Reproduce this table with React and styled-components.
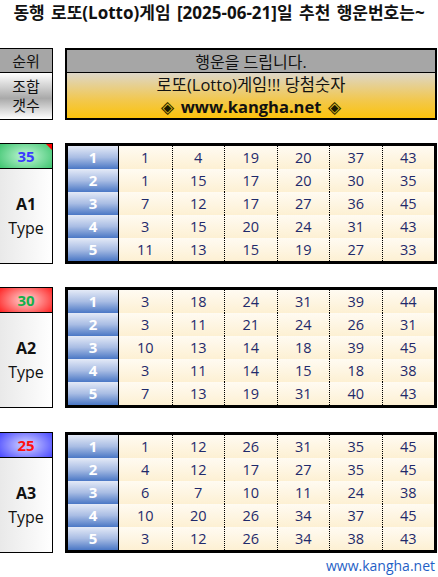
import React from "react";
import styled, { createGlobalStyle } from "styled-components";

const Global = createGlobalStyle`
  html, body { margin: 0; padding: 0; background: #fff; }
  body { font-family: "Open Sans", "Noto Sans CJK KR", sans-serif; width: 438px; overflow: hidden; }
`;

const Page = styled.div`
  width: 438px;
  display: flex;
  flex-direction: column;
`;

const Title = styled.h1`
  margin: 0;
  height: 48px;
  padding-top: 1px;
  box-sizing: border-box;
  font-size: 17px;
  font-weight: 700;
  line-height: 24px;
  text-align: center;
  color: #111;
  word-spacing: 2px;
  white-space: nowrap;
`;

const Row = styled.div`
  display: flex;
  align-items: stretch;
  gap: 12px;
  margin-left: -1px;
`;

const LeftCol = styled.div`
  width: 54px;
  box-sizing: border-box;
  border: 1px solid #000;
  display: flex;
  flex-direction: column;
  flex-shrink: 0;
`;

const HeadCol = styled(LeftCol)`
  height: 72px;
`;

const RankHead = styled.div`
  height: 23px;
  background: #a6a6a6;
  border-bottom: 1px solid #000;
  display: flex;
  align-items: center;
  justify-content: center;
  font-size: 15px;
  color: #111;
`;

const CountHead = styled.div`
  flex: 1;
  background: linear-gradient(#ffffff 0%, #a9a9a9 55%, #ffffff 100%);
  display: flex;
  flex-direction: column;
  align-items: center;
  justify-content: center;
  font-size: 15px;
  line-height: 19px;
  color: #111;
`;

const MainHead = styled.div`
  flex: 1;
  box-sizing: border-box;
  border: 2px solid #000;
  display: flex;
  flex-direction: column;
  margin-right: 1px;
`;

const GrayBar = styled.div`
  height: 22px;
  background: #a6a6a6;
  border-bottom: 1px solid #000;
  display: flex;
  align-items: center;
  justify-content: center;
  font-size: 16px;
  color: #111;
`;

const GoldBar = styled.div`
  flex: 1;
  background: linear-gradient(#ddd6c8 0%, #f2c84e 60%, #fcc30c 100%);
  display: flex;
  flex-direction: column;
  align-items: center;
  justify-content: center;
  font-size: 16.5px;
  line-height: 22px;
  color: #111;
`;

const Site = styled.span`
  font-weight: 700;
  display: flex;
  align-items: center;
  gap: 7px;
`;

const Diamond = styled.span`
  font-weight: 400;
  color: #1a1a00;
  font-size: 17px;
  text-shadow: 0 0 1px #d8b000;
`;

const Block = styled.div`
  display: flex;
  gap: 12px;
  margin-left: -1px;
  margin-top: ${(p) => p.$top}px;
`;

const TypeCol = styled(LeftCol)`
  height: 121px;
`;

const Badge = styled.div`
  position: relative;
  height: 24px;
  border-bottom: 1px solid #000;
  display: flex;
  align-items: center;
  justify-content: center;
  font-size: 15px;
  font-weight: 700;
  color: ${(p) => p.$fg};
  background:
    radial-gradient(ellipse 70% 90% at 50% 50%, ${(p) => p.$light} 0%, ${(p) => p.$light} 20%, transparent 100%),
    ${(p) => p.$dark};
`;

const Corner = styled.span`
  position: absolute;
  top: 0;
  right: 0;
  width: 0;
  height: 0;
  border-top: 6px solid #ff0000;
  border-left: 6px solid transparent;
`;

const TypeCell = styled.div`
  flex: 1;
  background: linear-gradient(90deg, #e9e9e9 0%, #ffffff 100%);
  display: flex;
  flex-direction: column;
  align-items: center;
  justify-content: center;
  font-size: 16px;
  line-height: 24px;
  color: #111;
`;

const TypeName = styled.span`
  font-weight: 700;
`;

const Table = styled.div`
  flex: 1;
  height: 121px;
  box-sizing: border-box;
  border: 3px solid #000;
  margin-right: 1px;
  display: grid;
  grid-template-columns: 51px repeat(6, 1fr);
  grid-template-rows: repeat(5, 1fr);
`;

const Idx = styled.div`
  background: linear-gradient(#e4eaf7 0%, #a9bde4 50%, #4a77c5 100%);
  border-right: 1px solid #000;
  display: flex;
  align-items: center;
  justify-content: center;
  color: #fff;
  font-weight: 700;
  font-size: 15px;
  padding-bottom: 2px;
`;

const Num = styled.div`
  background: linear-gradient(#fffbf2 0%, #fdf0d3 100%);
  border-left: ${(p) => (p.$first ? "none" : "1px dotted #000")};
  display: flex;
  align-items: center;
  justify-content: center;
  color: #1f2a6b;
  font-size: 14.5px;
`;

const Footer = styled.div`
  margin-top: 4px;
  text-align: right;
  padding-right: 3px;
  font-size: 14px;
  line-height: 18px;
  color: #1f5fc6;
`;

const blocks = [
  {
    count: 35, name: "A1", fg: "#3a3aff", light: "#a6ecc0", dark: "#2fbf64", top: 23, corner: true,
    rows: [
      [1, 4, 19, 20, 37, 43],
      [1, 15, 17, 20, 30, 35],
      [7, 12, 17, 27, 36, 45],
      [3, 15, 20, 24, 31, 43],
      [11, 13, 15, 19, 27, 33],
    ],
  },
  {
    count: 30, name: "A2", fg: "#15b04a", light: "#ffb0b0", dark: "#ff1010", top: 23,
    rows: [
      [3, 18, 24, 31, 39, 44],
      [3, 11, 21, 24, 26, 31],
      [10, 13, 14, 18, 39, 45],
      [3, 11, 14, 15, 18, 38],
      [7, 13, 19, 31, 40, 43],
    ],
  },
  {
    count: 25, name: "A3", fg: "#ff1010", light: "#b8b8ff", dark: "#3a3aff", top: 24,
    rows: [
      [1, 12, 26, 31, 35, 45],
      [4, 12, 17, 27, 35, 45],
      [6, 7, 10, 11, 24, 38],
      [10, 20, 26, 34, 37, 45],
      [3, 12, 26, 34, 38, 43],
    ],
  },
];

export default function App() {
  return (
    <Page>
      <Global />
      <Title>동행 로또(Lotto)게임 [2025-06-21]일 추천 행운번호는~</Title>
      <Row>
        <HeadCol>
          <RankHead>순위</RankHead>
          <CountHead>
            <span>조합</span>
            <span>갯수</span>
          </CountHead>
        </HeadCol>
        <MainHead>
          <GrayBar>행운을 드립니다.</GrayBar>
          <GoldBar>
            <span>로또(Lotto)게임!!! 당첨숫자</span>
            <Site>
              <Diamond>◈</Diamond>
              www.kangha.net
              <Diamond>◈</Diamond>
            </Site>
          </GoldBar>
        </MainHead>
      </Row>
      {blocks.map((b) => (
        <Block key={b.name} $top={b.top}>
          <TypeCol>
            <Badge $fg={b.fg} $light={b.light} $dark={b.dark}>
              {b.count}
              {b.corner && <Corner />}
            </Badge>
            <TypeCell>
              <TypeName>{b.name}</TypeName>
              <span>Type</span>
            </TypeCell>
          </TypeCol>
          <Table>
            {b.rows.map((r, i) => (
              <React.Fragment key={i}>
                <Idx>{i + 1}</Idx>
                {r.map((n, j) => (
                  <Num key={j} $first={j === 0}>
                    {n}
                  </Num>
                ))}
              </React.Fragment>
            ))}
          </Table>
        </Block>
      ))}
      <Footer>www.kangha.net</Footer>
    </Page>
  );
}
